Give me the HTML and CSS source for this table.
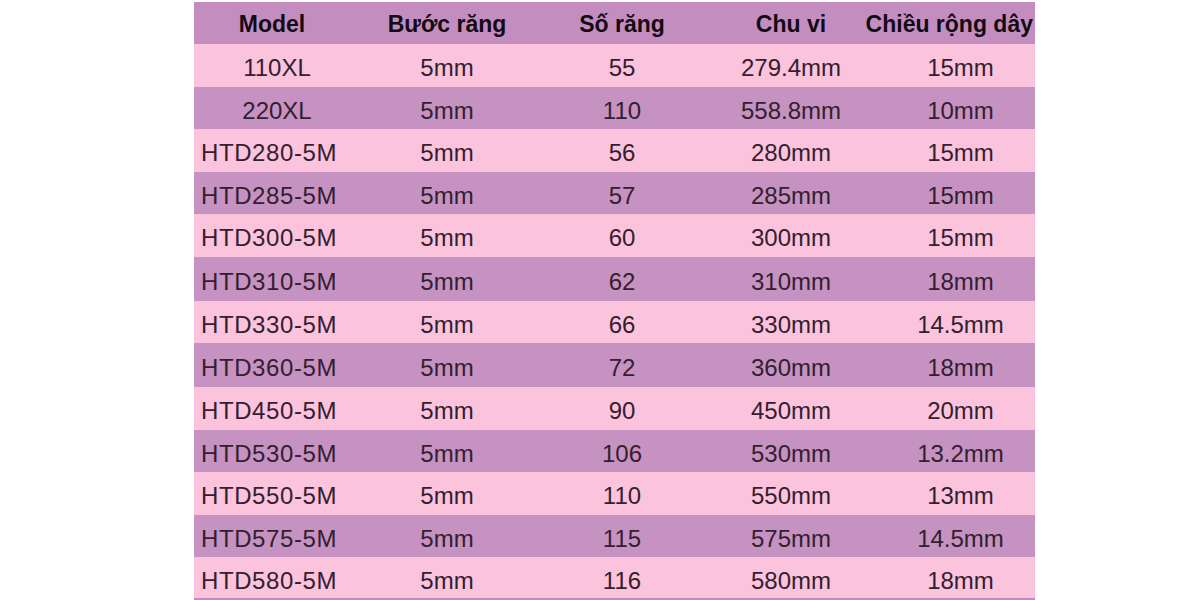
FILE: index.html
```html
<!DOCTYPE html>
<html lang="vi">
<head>
<meta charset="utf-8">
<title>Bảng dây đai</title>
<link rel="stylesheet" href="styles.css">
</head>
<body>
<div class="page">
<table class="belt">
<colgroup>
<col class="c1"><col class="c2"><col class="c3"><col class="c4"><col class="c5">
</colgroup>
<thead>
<tr class="head"><th>Model</th><th>Bước răng</th><th>Số răng</th><th>Chu vi</th><th class="last">Chiều rộng dây</th></tr>
</thead>
<tbody>
<tr><td class="m1">110XL</td><td>5mm</td><td>55</td><td>279.4mm</td><td class="w">15mm</td></tr>
<tr><td class="m1">220XL</td><td>5mm</td><td>110</td><td>558.8mm</td><td class="w">10mm</td></tr>
<tr><td>HTD280-5M</td><td>5mm</td><td>56</td><td>280mm</td><td class="w">15mm</td></tr>
<tr><td>HTD285-5M</td><td>5mm</td><td>57</td><td>285mm</td><td class="w">15mm</td></tr>
<tr><td>HTD300-5M</td><td>5mm</td><td>60</td><td>300mm</td><td class="w">15mm</td></tr>
<tr class="tall"><td>HTD310-5M</td><td>5mm</td><td>62</td><td>310mm</td><td class="w">18mm</td></tr>
<tr><td>HTD330-5M</td><td>5mm</td><td>66</td><td>330mm</td><td class="w">14.5mm</td></tr>
<tr class="tall"><td>HTD360-5M</td><td>5mm</td><td>72</td><td>360mm</td><td class="w">18mm</td></tr>
<tr><td>HTD450-5M</td><td>5mm</td><td>90</td><td>450mm</td><td class="w">20mm</td></tr>
<tr><td>HTD530-5M</td><td>5mm</td><td>106</td><td>530mm</td><td class="w">13.2mm</td></tr>
<tr><td>HTD550-5M</td><td>5mm</td><td>110</td><td>550mm</td><td class="w">13mm</td></tr>
<tr><td>HTD575-5M</td><td>5mm</td><td>115</td><td>575mm</td><td class="w">14.5mm</td></tr>
<tr><td>HTD580-5M</td><td>5mm</td><td>116</td><td>580mm</td><td class="w">18mm</td></tr>
</tbody>
</table>
</div>
</body>
</html>
```
FILE: styles.css
```css
html, body {
  margin: 0;
  padding: 0;
  background: #ffffff;
}
.page {
  padding-left: 194px;
  padding-top: 2px;
  width: 841px;
  height: 598px;
  overflow: hidden;
}
.belt {
  width: 841px;
  border-collapse: collapse;
  table-layout: fixed;
  font-family: "Liberation Sans", Arial, sans-serif;
  color: #33202f;
  border-bottom: 3px solid #c08cbc;
}
.c1 { width: 156px; }
.c2 { width: 194px; }
.c3 { width: 156px; }
.c4 { width: 182px; }
.c5 { width: 153px; }
.belt th {
  height: 42px;
  padding: 3px 0 0 0;
  box-sizing: border-box;
  font-size: 23px;
  font-weight: bold;
  color: #140a14;
  text-align: center;
  white-space: nowrap;
  background: #c38ebf;
}
.belt th.last {
  overflow: visible;
  direction: rtl;
  text-align: right;
  padding-right: 2px;
}
.belt td {
  height: 42.5px;
  padding: 6px 0 0 0;
  font-size: 24px;
  text-align: center;
  vertical-align: middle;
  white-space: nowrap;
  box-sizing: border-box;
}
.belt tr.tall td { height: 44px; }
.belt td:first-child {
  text-align: left;
  padding-left: 7px;
  letter-spacing: 0.6px;
}
.belt td.m1 {
  text-align: center;
  padding-left: 10px;
  letter-spacing: 0;
}
.belt td.w { padding-left: 4px; }
.belt tbody tr:nth-child(odd) { background: #fcc3dd; }
.belt tbody tr:nth-child(even) { background: #c592c1; }
```
